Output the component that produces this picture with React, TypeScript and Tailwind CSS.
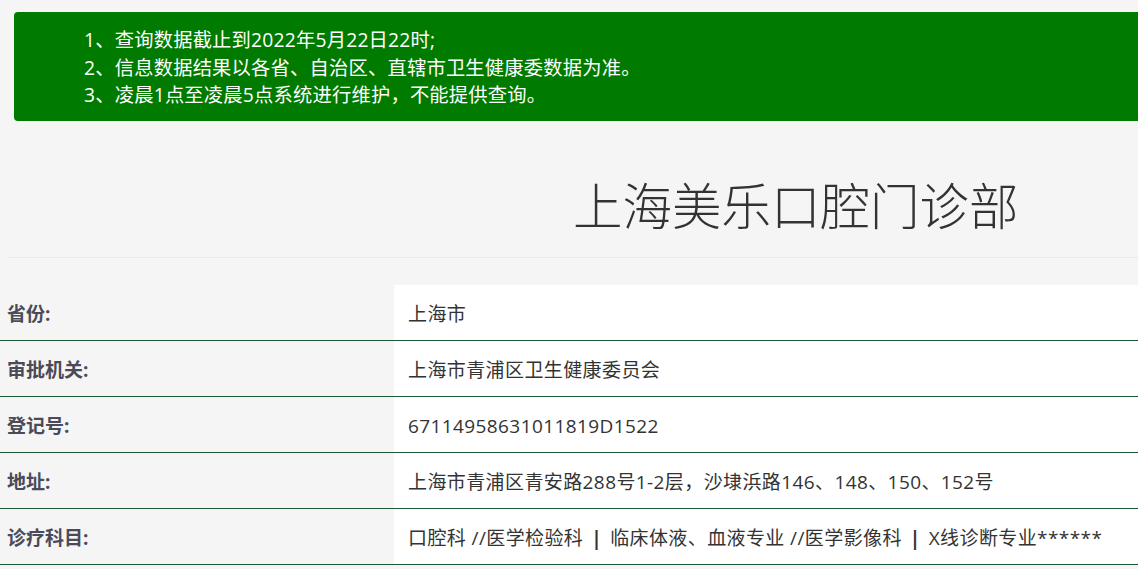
import React from "react";

const rows = [
  { label: "省份:", value: "上海市" },
  { label: "审批机关:", value: "上海市青浦区卫生健康委员会" },
  { label: "登记号:", value: "67114958631011819D1522" },
  { label: "地址:", value: "上海市青浦区青安路288号1-2层，沙埭浜路146、148、150、152号" },
  {
    label: "诊疗科目:",
    value: (
      <>
        口腔科 //医学检验科 <b className="mx-[8px]">|</b> 临床体液、血液专业 //医学影像科 <b className="mx-[8px]">|</b> X线诊断专业******
      </>
    ),
  },
];

const App = () => {
  return (
    <div
      className="min-h-screen bg-[#f5f5f5] overflow-hidden"
      style={{ fontFamily: '"Open Sans", "Noto Sans CJK SC", sans-serif' }}
    >
      <div className="pt-[12px] pl-[14px]">
        <div className="bg-[#007b00] rounded-l-[4px] h-[109px] pl-[70px] pt-[14px] text-white text-[19.3px] leading-[27.5px] tracking-[0.2px]">
          <p>1、查询数据截止到2022年5月22日22时;</p>
          <p>2、信息数据结果以各省、自治区、直辖市卫生健康委数据为准。</p>
          <p>3、凌晨1点至凌晨5点系统进行维护，不能提供查询。</p>
        </div>
      </div>

      <div className="ml-[7px] border-b border-[#ebebeb] h-[137px] flex items-center pl-[566px] pt-[36px]">
        <h1 className="text-[49.5px] font-light text-[#333] leading-none">上海美乐口腔门诊部</h1>
      </div>

      <div className="mt-[27px]">
        {rows.map((r) => (
          <div key={r.label} className="flex h-[56px] border-b border-[#1e5b3b]">
            <div className="w-[394px] shrink-0 flex items-center pl-[7px] pt-[3px] text-[19px] font-bold text-[#4a4a58]">
              {r.label}
            </div>
            <div className="flex-1 bg-white flex items-center pl-[14px] pt-[3px] text-[19px] tracking-[0.4px] text-[#333]">
              {r.value}
            </div>
          </div>
        ))}
      </div>
    </div>
  );
};

export default App;
